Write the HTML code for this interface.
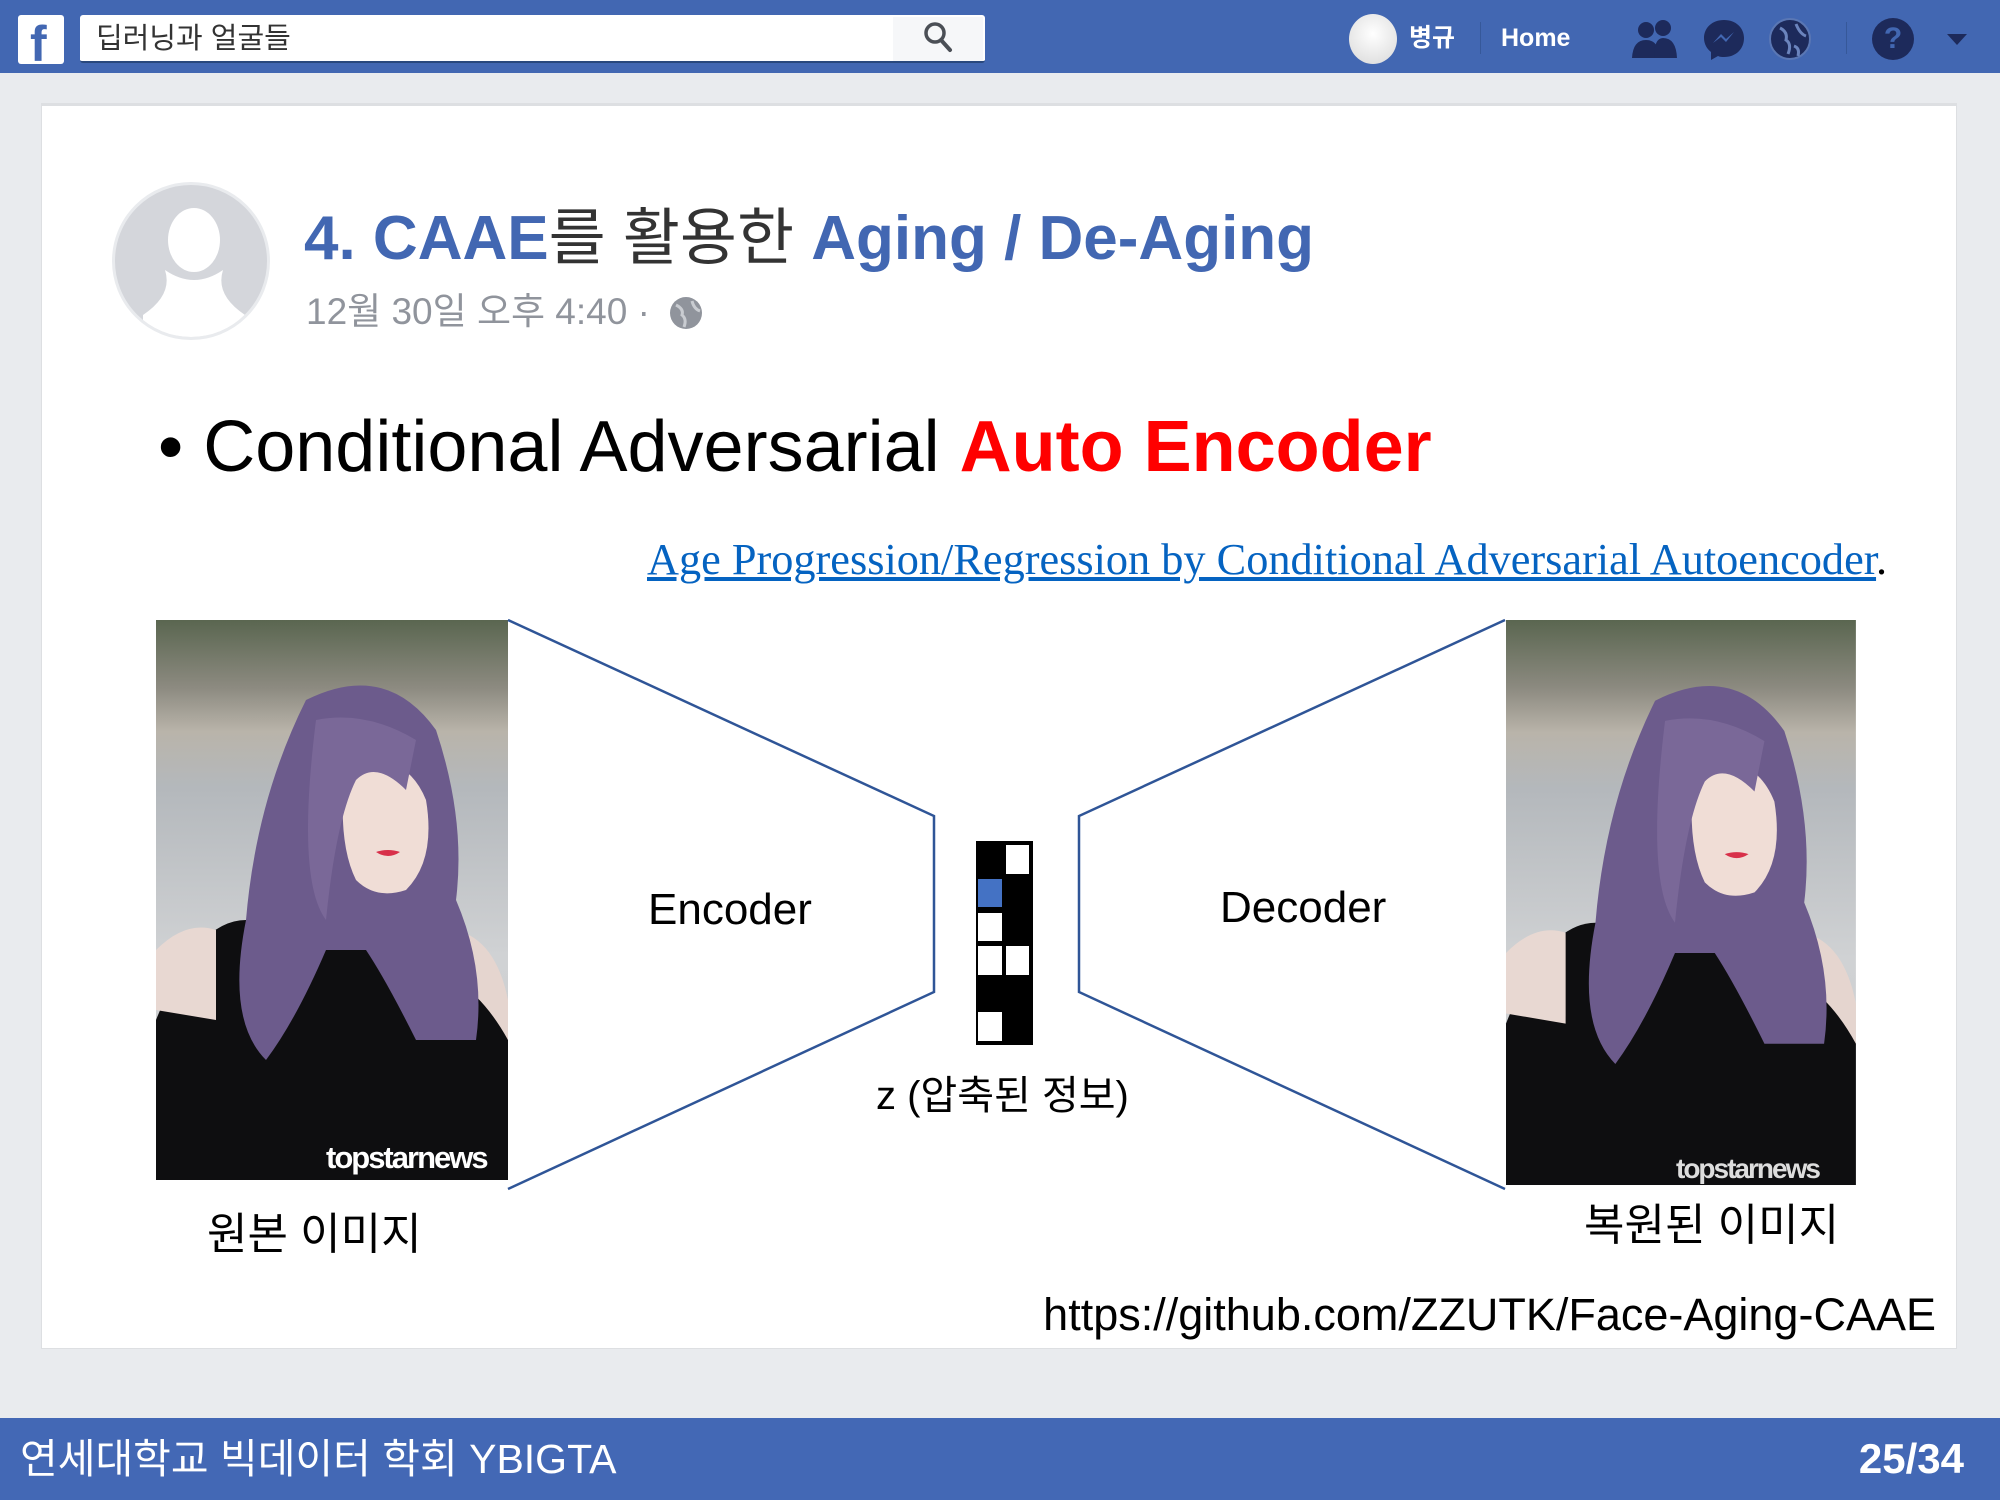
<!DOCTYPE html>
<html><head><meta charset="utf-8"><style>
*{margin:0;padding:0;box-sizing:border-box}
body{width:2000px;height:1500px;background:#e9ebee;position:relative;overflow:hidden;font-family:"Liberation Sans","Noto Sans CJK KR",sans-serif}
.abs{position:absolute;white-space:nowrap}
.top{position:absolute;left:0;top:0;width:2000px;height:73px;background:#4267b2}
.card{position:absolute;left:41px;top:103px;width:1916px;height:1246px;background:#fff;border:1px solid #dddfe2;border-top:3px solid #dddfe2}
.bot{position:absolute;left:0;top:1418px;width:2000px;height:82px;background:#4368b5}
</style></head><body>
<div class="top"></div>
<div class="abs" style="left:18px;top:15px;width:46px;height:49px;background:#fff;border-radius:3px"></div>
<div class="abs" style="left:30px;top:16px;font:bold 50px 'Liberation Sans',sans-serif;color:#4267b2;line-height:56px">f</div>
<div class="abs" style="left:80px;top:15px;width:905px;height:48px;background:#fff;border-radius:3px;border-bottom:2px solid #29487d"></div>
<div class="abs" style="left:893px;top:17px;width:90px;height:44px;background:#f6f7f9"></div>
<div class="abs" style="left:96px;top:20px;font-size:29px;color:#333;line-height:38px">딥러닝과 얼굴들</div>
<svg class="abs" style="left:922px;top:20px" width="32" height="34" viewBox="0 0 32 34"><circle cx="13" cy="13" r="9" fill="none" stroke="#4b4f56" stroke-width="3.5"/><path d="M19 20 L28 30" stroke="#4b4f56" stroke-width="4" stroke-linecap="round"/></svg>
<div class="abs" style="left:1349px;top:14px;width:48px;height:50px;border-radius:50%;background:radial-gradient(circle at 50% 40%,#fff,#d8d8d8)"></div>
<div class="abs" style="left:1409px;top:20px;font-weight:bold;font-size:25px;color:#fff;line-height:36px">병규</div>
<div class="abs" style="left:1480px;top:22px;width:1px;height:32px;background:#365899"></div>
<div class="abs" style="left:1501px;top:20px;font-weight:bold;font-size:25px;color:#fff;line-height:36px">Home</div>
<svg class="abs" style="left:1630px;top:18px" width="50" height="42" viewBox="0 0 50 42"><circle cx="16" cy="12" r="8" fill="#1d2a5b"/><path d="M2 40 Q3 22 16 22 Q29 22 30 40Z" fill="#1d2a5b"/><circle cx="33" cy="10" r="8" fill="#1d2a5b"/><path d="M24 40 Q24 20 33 20 Q46 20 47 40Z" fill="#1d2a5b"/></svg>
<svg class="abs" style="left:1702px;top:18px" width="44" height="44" viewBox="0 0 44 44"><path d="M22 2 C10 2 2 10 2 20 C2 26 5 31 9 34 L9 42 L16 38 C18 39 20 39 22 39 C34 39 42 31 42 20 C42 10 34 2 22 2Z" fill="#1d2a5b"/><path d="M11 25 L19 16 L24 21 L32 14 L24 24 L19 19Z" fill="#4267b2"/></svg>
<svg class="abs" style="left:1768px;top:16px" width="44" height="46" viewBox="0 0 44 46"><circle cx="22" cy="23" r="20" fill="#1d2a5b" stroke="#5a77b4" stroke-width="2"/><path d="M12 12 Q20 16 18 24 Q24 28 20 38 M28 8 Q32 18 38 20 M26 30 Q32 32 30 40" stroke="#6b84bd" stroke-width="3" fill="none"/></svg>
<div class="abs" style="left:1846px;top:22px;width:1px;height:32px;background:#365899"></div>
<div class="abs" style="left:1872px;top:18px;width:42px;height:42px;border-radius:50%;background:#1d2a5b;color:#4267b2;font-weight:bold;font-size:30px;text-align:center;line-height:42px">?</div>
<div class="abs" style="left:1947px;top:34px;width:0;height:0;border-left:10px solid transparent;border-right:10px solid transparent;border-top:11px solid #1d2a5b"></div>

<div class="card"></div>
<div class="abs" style="left:112px;top:182px;width:158px;height:158px;border-radius:50%;background:#d4d6db;border:3px solid #e9ebee;overflow:hidden">
<svg width="158" height="158" viewBox="0 0 158 158"><ellipse cx="79" cy="55" rx="26" ry="32" fill="#fff"/><path d="M50 85 Q79 105 108 85 Q100 110 130 130 L130 160 L28 160 L28 130 Q58 110 50 85Z" fill="#fff"/></svg></div>
<div class="abs" style="left:304px;top:199px;font-weight:bold;font-size:62px;color:#4267b2;line-height:80px">4. CAAE<span style="color:#333;font-weight:normal">를 활용한</span> Aging / De-Aging</div>
<div class="abs" style="left:306px;top:290px;font-size:37px;color:#90949c;line-height:44px">12월 30일 오후 4:40 · </div>
<svg class="abs" style="left:668px;top:295px" width="36" height="36" viewBox="0 0 36 36"><circle cx="18" cy="18" r="16" fill="#90949c"/><path d="M8 10 Q16 14 14 20 Q19 24 16 32 M24 6 Q26 14 32 16" stroke="#c9ccd1" stroke-width="3" fill="none"/></svg>

<div class="abs" style="left:158px;top:402px;font-size:72px;color:#000;line-height:90px">• Conditional Adversarial <b style="color:#ff0000">Auto Encoder</b></div>
<div class="abs" style="left:647px;top:535px;font-family:'Liberation Serif',serif;font-size:44.3px;color:#0563c1;line-height:50px"><u>Age Progression/Regression by Conditional Adversarial Autoencoder</u><span style="color:#000">.</span></div>

<svg class="abs" style="left:0;top:0" width="2000" height="1500">
<defs>
<linearGradient id="bg" x1="0" y1="0" x2="0" y2="1"><stop offset="0" stop-color="#5a6650"/><stop offset=".12" stop-color="#8c8a80"/><stop offset=".2" stop-color="#b9b4aa"/><stop offset=".3" stop-color="#b4b8bc"/><stop offset=".6" stop-color="#d0d2d4"/><stop offset="1" stop-color="#c8cacc"/></linearGradient>
<g id="ph">
<rect width="352" height="560" fill="url(#bg)"/>
<path d="M0 400 Q40 300 90 300 L260 300 Q320 310 352 420 L352 560 L0 560Z" fill="#0e0e10"/>
<path d="M0 330 Q30 300 60 310 L60 400 L0 390Z" fill="#e8d8d2"/>
<path d="M300 310 Q340 320 352 380 L352 420 Q330 380 300 360Z" fill="#e5d5cf"/>
<path d="M150 80 Q230 40 280 110 Q310 200 300 280 Q330 350 320 420 L260 420 Q230 360 210 330 L170 330 Q140 400 110 440 Q70 400 90 300 Q100 180 150 80Z" fill="#6c5b8c"/>
<path d="M190 140 Q250 130 270 180 Q280 240 250 270 Q220 280 200 260 Q180 220 190 140Z" fill="#f0ddd6"/>
<path d="M220 232 Q232 228 244 232 Q232 240 220 232Z" fill="#d8304a"/>
<path d="M160 100 Q210 90 260 120 L250 170 Q220 140 200 160 Q180 200 170 300 Q140 260 160 100Z" fill="#7a6898"/>
</g>
</defs>
<use href="#ph" transform="translate(156,620)"/>
<g transform="translate(1506,620) scale(0.994,1.009)"><use href="#ph"/></g>
<text x="326" y="1168" font-family="Liberation Sans,sans-serif" font-weight="bold" font-size="31" fill="#fff" letter-spacing="-2">topstarnews</text>
<text x="1676" y="1178" font-family="Liberation Sans,sans-serif" font-weight="bold" font-size="28" fill="#ddd" letter-spacing="-2">topstarnews</text>
<polyline points="508,620 934,816 934,992 508,1189" fill="none" stroke="#2f5597" stroke-width="2.5"/>
<polyline points="1505,620 1079,816 1079,992 1505,1189" fill="none" stroke="#2f5597" stroke-width="2.5"/>
<rect x="976" y="841" width="57" height="204" fill="#000"/>
<g fill="#fff"><rect x="1006" y="845" width="23" height="29"/><rect x="978" y="913" width="24" height="28"/><rect x="978" y="946" width="24" height="29"/><rect x="1006" y="946" width="23" height="29"/><rect x="978" y="1012" width="24" height="29"/></g>
<rect x="978" y="879" width="24" height="28" fill="#4472c4"/>
</svg>
<div class="abs" style="left:648px;top:884px;font-size:44px;color:#000;line-height:52px">Encoder</div>
<div class="abs" style="left:1220px;top:882px;font-size:44px;color:#000;line-height:52px">Decoder</div>
<div class="abs" style="left:876px;top:1073px;font-size:40px;color:#000;line-height:46px">z (압축된 정보)</div>
<div class="abs" style="left:207px;top:1208px;font-size:44px;color:#000;line-height:54px">원본 이미지</div>
<div class="abs" style="left:1584px;top:1199px;font-size:44px;color:#000;line-height:54px">복원된 이미지</div>
<div class="abs" style="right:64px;top:1288px;font-size:45px;color:#000;line-height:54px">https://github.com/ZZUTK/Face-Aging-CAAE</div>

<div class="bot"></div>
<div class="abs" style="left:20px;top:1434px;font-size:41px;color:#fff;line-height:50px">연세대학교 빅데이터 학회 YBIGTA</div>
<div class="abs" style="right:36px;top:1434px;font-size:42px;font-weight:bold;color:#fff;line-height:50px">25/34</div>
</body></html>
